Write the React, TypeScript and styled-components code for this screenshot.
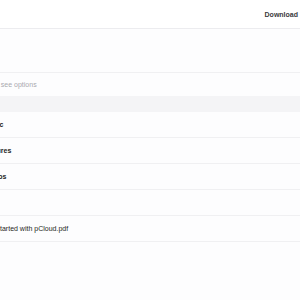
import styled, { createGlobalStyle } from "styled-components";

const GlobalStyle = createGlobalStyle`
  html, body {
    margin: 0;
    padding: 0;
    background: #fdfdfe;
    font-family: "Liberation Sans", Arial, sans-serif;
  }
`;

const Page = styled.div`
  width: 300px;
  height: 300px;
  overflow: hidden;
  background: #fdfdfe;
`;

const TopBar = styled.div`
  height: 28px;
  display: flex;
  align-items: center;
  justify-content: flex-end;
  padding-right: 2px;
  background: #ffffff;
  border-bottom: 1px solid #ececef;
`;

const DownloadButton = styled.span`
  font-size: 7px;
  font-weight: 700;
  color: #3a3a3d;
`;

const Breadcrumbs = styled.div`
  height: 43px;
  border-bottom: 1px solid #f0f0f2;
`;

const HintRow = styled.div`
  height: 23px;
  display: flex;
  align-items: center;
  font-size: 7px;
  color: #a9a9ae;
  white-space: nowrap;
`;

const Shifted = styled.span<{ $offset: number }>`
  margin-left: ${(p) => -p.$offset}px;
`;

const ColumnHeader = styled.div`
  height: 16px;
  background: #f4f4f6;
`;

const Row = styled.div`
  height: 25px;
  display: flex;
  align-items: center;
  border-bottom: 1px solid #f0f0f2;
  white-space: nowrap;
`;

const Name = styled.span<{ $folder?: boolean }>`
  margin-left: -28px;
  font-size: 7px;
  font-weight: ${(p) => (p.$folder ? 700 : 400)};
  color: #1f1f22;
`;

const items = [
  { name: "My Music", folder: true },
  { name: "My Pictures", folder: true },
  { name: "My Videos", folder: true },
  { name: "", folder: true },
  { name: "Getting started with pCloud.pdf", folder: false },
];

export default function App() {
  return (
    <Page>
      <GlobalStyle />
      <TopBar>
        <DownloadButton>Download</DownloadButton>
      </TopBar>
      <Breadcrumbs />
      <HintRow>
        <Shifted $offset={47}>Select items to see options</Shifted>
      </HintRow>
      <ColumnHeader />
      {items.map((item, i) => (
        <Row key={i}>
          <Name $folder={item.folder}>{item.name}</Name>
        </Row>
      ))}
    </Page>
  );
}
